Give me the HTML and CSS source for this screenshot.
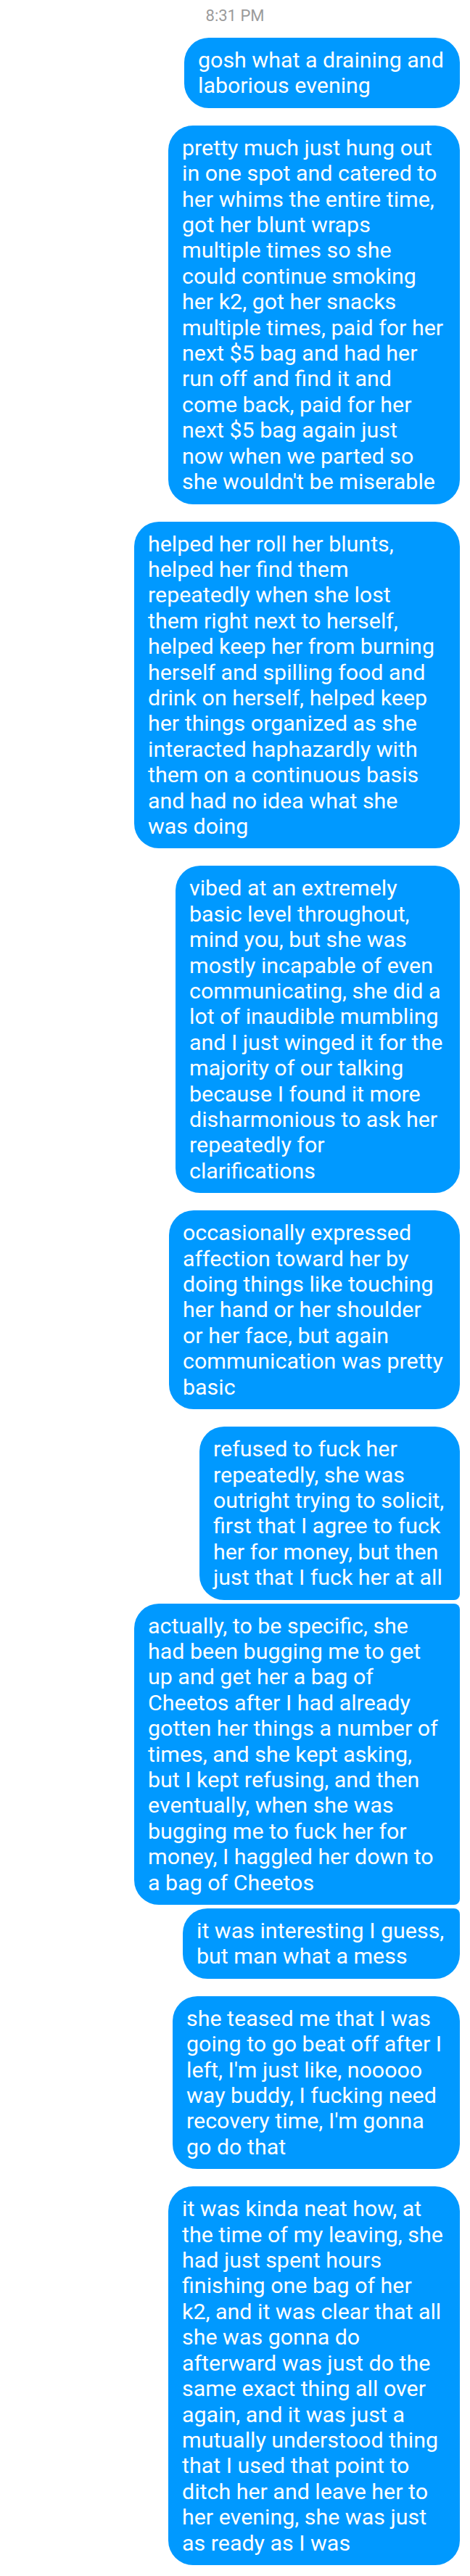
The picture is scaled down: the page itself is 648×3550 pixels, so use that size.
FILE: index.html
```html
<!DOCTYPE html>
<html lang="en">
<head>
<meta charset="utf-8">
<title>Chat</title>
<link rel="stylesheet" href="styles.css">
</head>
<body>
<main class="thread">
  <div class="stamp">8:31 PM</div>

  <div class="bubble w380">gosh what a draining and<br>laborious evening</div>

  <div class="bubble w402">pretty much just hung out<br>in one spot and catered to<br>her whims the entire time,<br>got her blunt wraps<br>multiple times so she<br>could continue smoking<br>her k2, got her snacks<br>multiple times, paid for her<br>next $5 bag and had her<br>run off and find it and<br>come back, paid for her<br>next $5 bag again just<br>now when we parted so<br>she wouldn't be miserable</div>

  <div class="bubble w449">helped her roll her blunts,<br>helped her find them<br>repeatedly when she lost<br>them right next to herself,<br>helped keep her from burning<br>herself and spilling food and<br>drink on herself, helped keep<br>her things organized as she<br>interacted haphazardly with<br>them on a continuous basis<br>and had no idea what she<br>was doing</div>

  <div class="bubble w392">vibed at an extremely<br>basic level throughout,<br>mind you, but she was<br>mostly incapable of even<br>communicating, she did a<br>lot of inaudible mumbling<br>and I just winged it for the<br>majority of our talking<br>because I found it more<br>disharmonious to ask her<br>repeatedly for<br>clarifications</div>

  <div class="bubble w401">occasionally expressed<br>affection toward her by<br>doing things like touching<br>her hand or her shoulder<br>or her face, but again<br>communication was pretty<br>basic</div>

  <div class="bubble w359 group-first">refused to fuck her<br>repeatedly, she was<br>outright trying to solicit,<br>first that I agree to fuck<br>her for money, but then<br>just that I fuck her at all</div>

  <div class="bubble w449 group-mid">actually, to be specific, she<br>had been bugging me to get<br>up and get her a bag of<br>Cheetos after I had already<br>gotten her things a number of<br>times, and she kept asking,<br>but I kept refusing, and then<br>eventually, when she was<br>bugging me to fuck her for<br>money, I haggled her down to<br>a bag of Cheetos</div>

  <div class="bubble w382 group-last">it was interesting I guess,<br>but man what a mess</div>

  <div class="bubble w396">she teased me that I was<br>going to go beat off after I<br>left, I'm just like, nooooo<br>way buddy, I fucking need<br>recovery time, I'm gonna<br>go do that</div>

  <div class="bubble w402">it was kinda neat how, at<br>the time of my leaving, she<br>had just spent hours<br>finishing one bag of her<br>k2, and it was clear that all<br>she was gonna do<br>afterward was just do the<br>same exact thing all over<br>again, and it was just a<br>mutually understood thing<br>that I used that point to<br>ditch her and leave her to<br>her evening, she was just<br>as ready as I was</div>
</main>
</body>
</html>
```

FILE: styles.css
```css
html, body {
  margin: 0;
  padding: 0;
  background: #ffffff;
}

body {
  font-family: Roboto, "Noto Sans", "Liberation Sans", sans-serif;
}

.thread {
  display: flex;
  flex-direction: column;
  align-items: flex-end;
  padding: 0 14px 16px 0;
}

.stamp {
  align-self: stretch;
  margin-right: -14px;
  text-align: center;
  color: #9b9b9b;
  font-size: 22px;
  line-height: 26px;
  padding-top: 9px;
  margin-bottom: 17px;
}

.bubble {
  box-sizing: border-box;
  background: #0099ff;
  color: #ffffff;
  font-size: 30.4px;
  line-height: 35.4px;
  padding: 13px 19px;
  border-radius: 34px;
  white-space: nowrap;
  margin-top: 24px;
}

.stamp + .bubble {
  margin-top: 0;
}

.group-first {
  border-bottom-right-radius: 8px;
}

.group-mid {
  margin-top: 5px;
  border-top-right-radius: 8px;
  border-bottom-right-radius: 8px;
}

.group-last {
  margin-top: 5px;
  border-top-right-radius: 8px;
}

.w359 { width: 359px; }
.w380 { width: 380px; }
.w382 { width: 382px; }
.w392 { width: 392px; }
.w396 { width: 396px; }
.w401 { width: 401px; }
.w402 { width: 402px; }
.w449 { width: 449px; }
```
